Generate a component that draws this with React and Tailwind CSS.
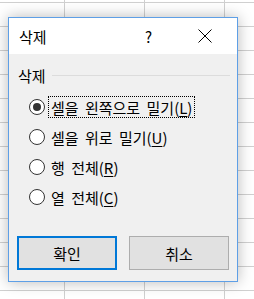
import React from "react";

const font = { fontFamily: '"Noto Sans CJK KR", "Malgun Gothic", sans-serif' };

function Radio({ checked, label, mnemonic, focused }) {
  return (
    <div className="flex items-center h-[30px]">
      <div className="w-[16px] h-[16px] rounded-full border border-[#333333] bg-white flex items-center justify-center shrink-0">
        {checked && <div className="w-[8px] h-[8px] rounded-full bg-[#333333]" />}
      </div>
      <div
        className={
          "ml-[3px] h-[22px] flex items-center px-[2px] text-[15px] leading-none text-black [word-spacing:3px] " +
          (focused ? "border border-dotted border-black" : "border border-transparent")
        }
      >
        <span>
          {label}(<span className="underline underline-offset-2">{mnemonic}</span>)
        </span>
      </div>
    </div>
  );
}

export default function App() {
  return (
    <div
      className="relative w-[254px] h-[299px] overflow-hidden bg-white bg-[linear-gradient(to_right,#d0d0d0_1px,transparent_1px),linear-gradient(to_bottom,#d0d0d0_1px,transparent_1px)] bg-[size:80px_24px] bg-[position:64px_2px]"
      style={font}
    >
      <div className="absolute left-[8px] top-[17px] w-[230px] h-[265px] border border-[#5e9fe6] bg-[#f0f0f0] shadow-[0_0_14px_rgba(0,0,0,0.28)] flex flex-col">
        <div className="h-[36px] bg-white flex items-center shrink-0">
          <span className="ml-[10px] text-[15px] text-black leading-none">삭제</span>
          <span className="ml-auto text-[15px] text-black leading-none mr-[46px]">?</span>
          <svg width="14" height="14" viewBox="0 0 14 14" className="mr-[25px]">
            <path d="M0.5 0.5 L13.5 13.5 M13.5 0.5 L0.5 13.5" stroke="#000" strokeWidth="1" fill="none" />
          </svg>
        </div>
        <div className="flex-1 flex flex-col pl-[9px] pr-[7px] pt-[11px]">
          <div className="flex items-center h-[20px]">
            <span className="text-[15px] text-black leading-none">삭제</span>
            <div className="flex-1 h-px bg-[#dcdcdc] ml-[6px]" />
          </div>
          <div className="flex flex-col pl-[11px] mt-[7px]">
            <Radio checked focused label="셀을 왼쪽으로 밀기" mnemonic="L" />
            <Radio label="셀을 위로 밀기" mnemonic="U" />
            <Radio label="행 전체" mnemonic="R" />
            <Radio label="열 전체" mnemonic="C" />
          </div>
          <div className="flex mt-auto mb-[11px] gap-[12px] -ml-[1px]">
            <button className="w-[100px] h-[34px] border-2 border-[#0078d7] bg-[#e1e1e1] text-[15px] text-black leading-none">
              확인
            </button>
            <button className="w-[100px] h-[34px] border border-[#adadad] bg-[#e1e1e1] text-[15px] text-black leading-none">
              취소
            </button>
          </div>
        </div>
      </div>
    </div>
  );
}
